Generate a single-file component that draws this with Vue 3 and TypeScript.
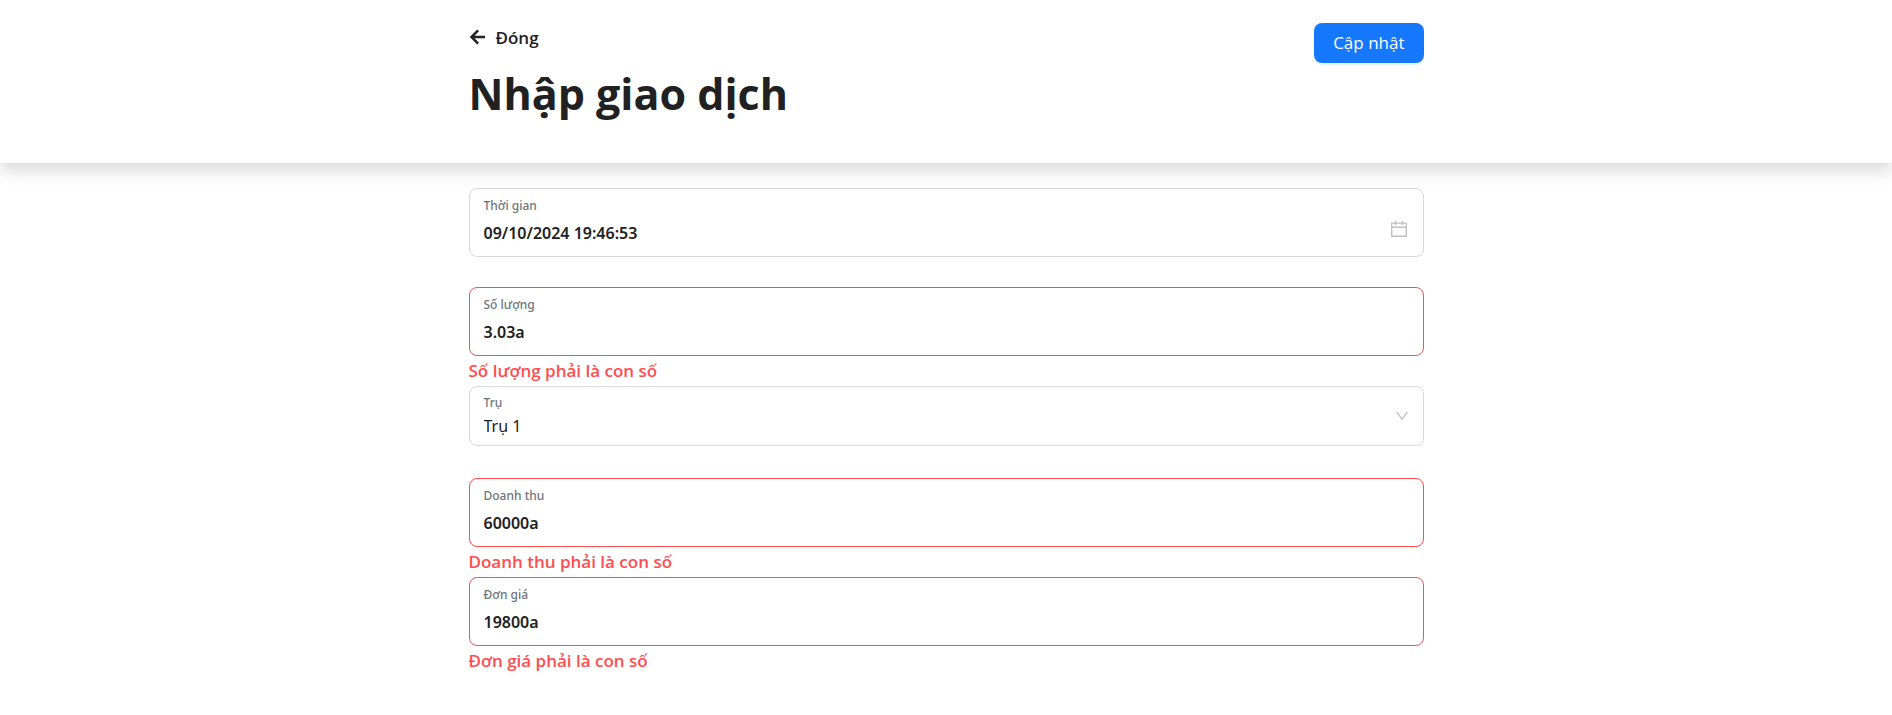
<script setup lang="ts">
import { reactive } from 'vue'

type Kind = 'text' | 'date' | 'select'

interface Field {
  id: string
  label: string
  value: string
  kind: Kind
}

const fields = reactive<Field[]>([
  { id: 'time', label: 'Thời gian', value: '09/10/2024 19:46:53', kind: 'date' },
  { id: 'quantity', label: 'Số lượng', value: '3.03a', kind: 'text' },
  { id: 'pump', label: 'Trụ', value: 'Trụ 1', kind: 'select' },
  { id: 'revenue', label: 'Doanh thu', value: '60000a', kind: 'text' },
  { id: 'price', label: 'Đơn giá', value: '19800a', kind: 'text' },
])

const errorOf = (field: Field): string =>
  field.kind === 'text' && Number.isNaN(Number(field.value))
    ? `${field.label} phải là con số`
    : ''
</script>

<template>
  <div class="page">
    <header class="header">
      <div class="container header-row">
        <div>
          <button type="button" class="back">
            <svg class="back-icon" viewBox="0 0 16 16" aria-hidden="true">
              <path d="M15.500 8H2M8.600 1.400L2 8l6.600 6.600" />
            </svg>
            <span>Đóng</span>
          </button>
          <h1 class="title">Nhập giao dịch</h1>
        </div>
        <button type="submit" form="transaction" class="submit">Cập nhật</button>
      </div>
    </header>

    <form id="transaction" class="container form" novalidate @submit.prevent>
      <div v-for="field in fields" :key="field.id" class="item">
        <div class="box" :class="[field.kind, { invalid: errorOf(field) }]">
          <div class="content">
            <label class="label" :for="field.id">{{ field.label }}</label>
            <select v-if="field.kind === 'select'" :id="field.id" v-model="field.value" class="control">
              <option>Trụ 1</option>
            </select>
            <input v-else :id="field.id" v-model="field.value" type="text" class="control" />
          </div>
          <svg v-if="field.kind === 'date'" class="icon" viewBox="64 64 896 896" aria-hidden="true">
            <path
              d="M880 184H712v-64c0-4.400-3.600-8-8-8h-56c-4.400 0-8 3.600-8 8v64H384v-64c0-4.400-3.600-8-8-8h-56c-4.400 0-8 3.600-8 8v64H144c-17.700 0-32 14.300-32 32v664c0 17.700 14.300 32 32 32h736c17.700 0 32-14.300 32-32V216c0-17.700-14.300-32-32-32zm-40 656H184V460h656v380zM184 392V256h128v48c0 4.400 3.600 8 8 8h56c4.400 0 8-3.600 8-8v-48h256v48c0 4.400 3.600 8 8 8h56c4.400 0 8-3.600 8-8v-48h128v136H184z"
            />
          </svg>
          <svg v-if="field.kind === 'select'" class="icon arrow" viewBox="64 64 896 896" aria-hidden="true">
            <path
              d="M884 256h-75c-5.100 0-9.900 2.500-12.900 6.600L512 654.200 227.900 262.600c-3-4.100-7.800-6.600-12.900-6.600h-75c-6.500 0-10.300 7.400-6.500 12.700l352.600 486.100c12.800 17.600 39 17.600 51.700 0l352.600-486.100c3.900-5.300.1-12.700-6.400-12.700z"
            />
          </svg>
        </div>
        <p class="error">{{ errorOf(field) }}</p>
      </div>
    </form>
  </div>
</template>

<style>
body {
  margin: 0;
  background: #fff;
}
</style>

<style scoped>
.page {
  font-family: 'Segoe UI', 'Open Sans', 'Noto Sans', sans-serif;
  font-size: 16px;
  line-height: 24px;
  color: #212121;
}

.container {
  box-sizing: border-box;
  width: 100%;
  max-width: 955px;
  margin: 0 auto;
}

.header {
  padding: 23px 0 39px;
  background: #fff;
  box-shadow: 0 8px 16px rgba(0, 0, 0, 0.15);
}

.header-row {
  display: flex;
  justify-content: space-between;
  align-items: flex-start;
}

button {
  font: inherit;
  cursor: pointer;
}

.back {
  display: flex;
  align-items: center;
  gap: 10px;
  margin: 3px 0 0;
  padding: 0;
  border: 0;
  background: none;
  color: inherit;
  font-size: 17px;
  font-weight: 600;
}

.back-icon {
  width: 17px;
  height: 16px;
  margin-bottom: 2px;
  fill: none;
  stroke: currentColor;
  stroke-width: 2.5;
}

.title {
  margin: 15px 0 1px;
  font-size: 43px;
  line-height: 58px;
  font-weight: 700;
}

.submit {
  height: 40px;
  padding: 0 19px;
  border: 0;
  border-radius: 8px;
  background: #1677ff;
  color: #fff;
  font-size: 17px;
  box-shadow: 0 2px 0 rgba(5, 145, 255, 0.1);
}

.form {
  padding-top: 25px;
}

.box {
  display: flex;
  align-items: center;
  padding: 8px 14px 11px;
  border: 1px solid #d9d9d9;
  border-radius: 8px;
  background: #fff;
}

.content {
  display: flex;
  flex: 1;
  flex-direction: column;
  gap: 6px;
}

.label {
  font-family: 'Segoe UI', 'Noto Sans', sans-serif;
  font-size: 12px;
  line-height: 18px;
  font-weight: 500;
  color: #6c757d;
}

.control {
  box-sizing: border-box;
  width: 100%;
  height: 24px;
  margin: 0;
  padding: 0;
  border: 0;
  outline: 0;
  appearance: none;
  background: none;
  color: inherit;
  font: inherit;
  font-family: 'Segoe UI', 'Noto Sans', sans-serif;
  font-weight: 600;
}

.select {
  margin-bottom: 2px;
  padding: 7px 14px;
}

.select .content {
  gap: 2px;
}

.select .control {
  font-weight: 400;
}

.invalid {
  border-color: #ff4d4f;
}

.icon {
  flex: none;
  width: 18px;
  height: 18px;
  margin: 16px 1px 0 0;
  fill: #bfbfbf;
}

.arrow {
  width: 14px;
  height: 14px;
  margin: 0;
}

.error {
  min-height: 24px;
  margin: 0;
  padding: 3px 0;
  color: #ff4d4f;
  font-size: 17px;
  font-weight: 600;
}
</style>
